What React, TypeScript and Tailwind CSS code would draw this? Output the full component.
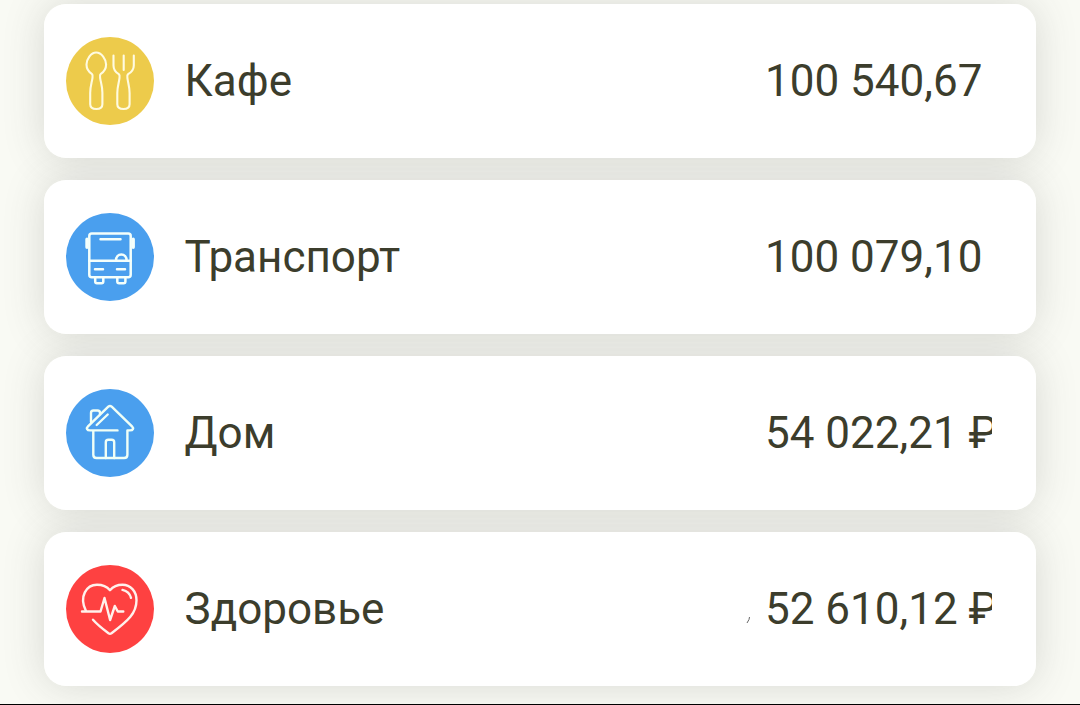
import React from 'react';

interface Category {
  id: string;
  title: string;
  amount: string;
  color: string;
  icon: React.ReactNode;
  mark?: boolean;
}

const CATEGORIES: Category[] = [
  {
    id: 'cafe',
    title: 'Кафе',
    amount: '100 540,67',
    color: 'bg-[#edcb4b]',
    icon: (
      <g stroke="#fffbe0" strokeWidth="2.1">
        {/* Spoon */}
        <path d="M30.200 15.500c-5.400 0-9.700 6.800-9.700 12 0 4.700 2.400 7.500 5.300 9.300 1.300 1 .9 2.500.6 4.500-.5 4-2.200 8-2.200 14.500v11.500c0 3 2 4.700 6.100 4.700s6.100-1.700 6.100-4.700v-11.500c0-6.500-1.700-10.500-2.200-14.500-.3-2-.7-3.500.6-4.500 2.900-1.800 5.300-4.600 5.300-9.300 0-5.200-4.500-12-9.900-12Z" />
        {/* Fork */}
        <path d="M47.500 18.500v10c0 4.500 2.500 7 5.300 8.700 1.300 1 .9 2.500.6 4.500-.5 4-2.100 8-2.100 14.300v11.300c0 3 2 4.700 6.200 4.700s6.100-1.700 6.100-4.700v-11.300c0-6.300-1.600-10.300-2.100-14.300-.3-2-.7-3.500.6-4.500 2.800-1.700 5.700-4.200 5.700-8.700v-10M57.700 18.500v14.500" />
      </g>
    ),
  },
  {
    id: 'transport',
    title: 'Транспорт',
    amount: '100 079,10',
    color: 'bg-[#4a9fee]',
    icon: (
      <g stroke="#f4fffb" strokeWidth="2.500">
        <rect x="23.300" y="20.500" width="41.400" height="43.700" rx="2.500" />
        <path d="M34.500 26.200h20M23.300 47.700h41.400M29 56.200h8M51 56.200h8" />
        <path d="M50 47.500c0-3.500 2.300-6 5.300-6s5.300 2.500 5.300 6" />
        <path d="M29.200 65v3.500q0 1.800 1.800 1.800h4.500q1.800 0 1.800-1.800v-3.500M51.300 65v3.500q0 1.800 1.800 1.800h4.500q1.800 0 1.800-1.800v-3.500" />
        <path d="M21 26.200v8M67.200 26.200v8" strokeWidth="3.400" />
      </g>
    ),
  },
  {
    id: 'home',
    title: 'Дом',
    amount: '54 022,21 ₽',
    color: 'bg-[#4a9fee]',
    icon: (
      <g stroke="#f0fff6" strokeWidth="2.400">
        <path d="M51.500 41.400h-27.500c-3 0-4-2-2-4l20.300-19.700q1.700-1.500 3.400 0l20.300 19.700c2 2 1 4-2 4h-2.600v24.300q0 3.300-3.300 3.300h-27.500q-3.300 0-3.300-3.300v-24.300" />
        <path d="M25 33v-9q0-2.500 2.500-2.500h4q2.500 0 2.500 2.500v1.300M30.700 36l11-10.500" />
        <path d="M39.800 69v-15.700q0-2.500 2.500-2.500h3.400q2.500 0 2.500 2.500v15.700" />
      </g>
    ),
  },
  {
    id: 'health',
    title: 'Здоровье',
    amount: '52 610,12 ₽',
    color: 'bg-[#fe4141]',
    mark: true,
    icon: (
      <g stroke="#fff1ec" strokeWidth="2.400">
        <path d="M19.800 45.500c-7-14 .7-25.800 11.200-25.800 6 0 10 2 13 5.500 3-3.500 7-5.500 12.500-5.500 8 0 14 6.500 14 15.500 0 13-8 20-25 33.100q-1.500 1-3 0c-6.500-5-11.500-9-15.500-13.600" />
        <path d="M16 46.500h18.500l4-13.500 5.600 22 4.700-14 3 5.500h5.500" />
        <path d="M56.500 24.900c4.500 1 7.500 4 8.500 8" />
      </g>
    ),
  },
];

const CategoryCard: React.FC<{ category: Category }> = ({ category }) => (
  <li className="relative flex h-[154px] items-center rounded-[22px] bg-white pl-[22px] before:absolute before:inset-0 before:-z-10 before:rounded-[22px] before:shadow-[0_0_42px_rgba(66,68,66,0.18)]">
    <div className={`h-[88px] w-[88px] shrink-0 rounded-full ${category.color}`}>
      <svg viewBox="0 0 88 88" className="h-full w-full" fill="none" strokeLinecap="round" strokeLinejoin="round">
        {category.icon}
      </svg>
    </div>
    <span className="ml-[30.5px] w-[538px]">{category.title}</span>
    <span className="relative ml-[42.5px] w-[227px]">
      {category.mark && (
        <svg viewBox="0 0 6 10" className="absolute top-[33px] -left-[20px] h-[10px] w-[6px]" fill="none">
          <path d="M4.500 1 4 3.500 2 7" stroke="#666" strokeWidth="1" />
        </svg>
      )}
      <span className="block overflow-hidden whitespace-nowrap">{category.amount}</span>
    </span>
  </li>
);

export default function App() {
  return (
    <main className="isolate h-[705px] overflow-hidden border-b border-black bg-[#f9faf4] px-[44px] pt-1 font-['Roboto',sans-serif] text-[44px] leading-[52px] text-[#3c3d2c]">
      <ul className="flex flex-col gap-[22px]">
        {CATEGORIES.map((category) => (
          <CategoryCard key={category.id} category={category} />
        ))}
      </ul>
    </main>
  );
}
